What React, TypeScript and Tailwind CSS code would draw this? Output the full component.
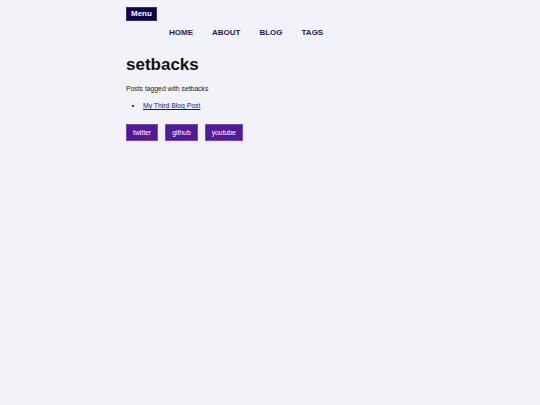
import React from 'react';

const NAV = ['HOME', 'ABOUT', 'BLOG', 'TAGS'];
const SOCIAL = ['twitter', 'github', 'youtube'];

export default function App() {
  return (
    <div className="min-h-[405px] w-full bg-[#f1f3f9]" style={{ fontFamily: '"Liberation Sans", Arial, sans-serif' }}>
      <div className="mx-auto w-[288px] pt-[7px]">
        {/* Header */}
        <header>
          <button className="block h-[14px] px-[4px] bg-[#10004d] text-white text-[8px] font-bold leading-[12px] border border-[#3a2d7a]">
            Menu
          </button>
          <nav className="flex gap-[19px] pl-[43px] mt-[6px]">
            {NAV.map(n => (
              <a key={n} href="#" className="text-[8px] font-bold text-[#1d1d55] leading-[12px]">{n}</a>
            ))}
          </nav>
        </header>

        {/* Main */}
        <main className="mt-[14px]">
          <h1 className="text-[17px] font-bold text-[#111] leading-[24px]">setbacks</h1>
          <p className="text-[6.8px] text-[#222] mt-[7px] leading-[10px]">Posts tagged with setbacks</p>
          <ul className="list-disc pl-[17px] mt-[7px] text-[6.8px] leading-[10px]">
            <li>
              <a href="#" className="text-[#1a0dab] underline">My Third Blog Post</a>
            </li>
          </ul>
          <div className="flex gap-[7px] mt-[13px]">
            {SOCIAL.map(s => (
              <a key={s} href="#" className="h-[17px] px-[6px] bg-[#521a96] border border-[#7a4bbd] text-white text-[6.8px] leading-[15px]">
                {s}
              </a>
            ))}
          </div>
        </main>
      </div>
    </div>
  );
}
